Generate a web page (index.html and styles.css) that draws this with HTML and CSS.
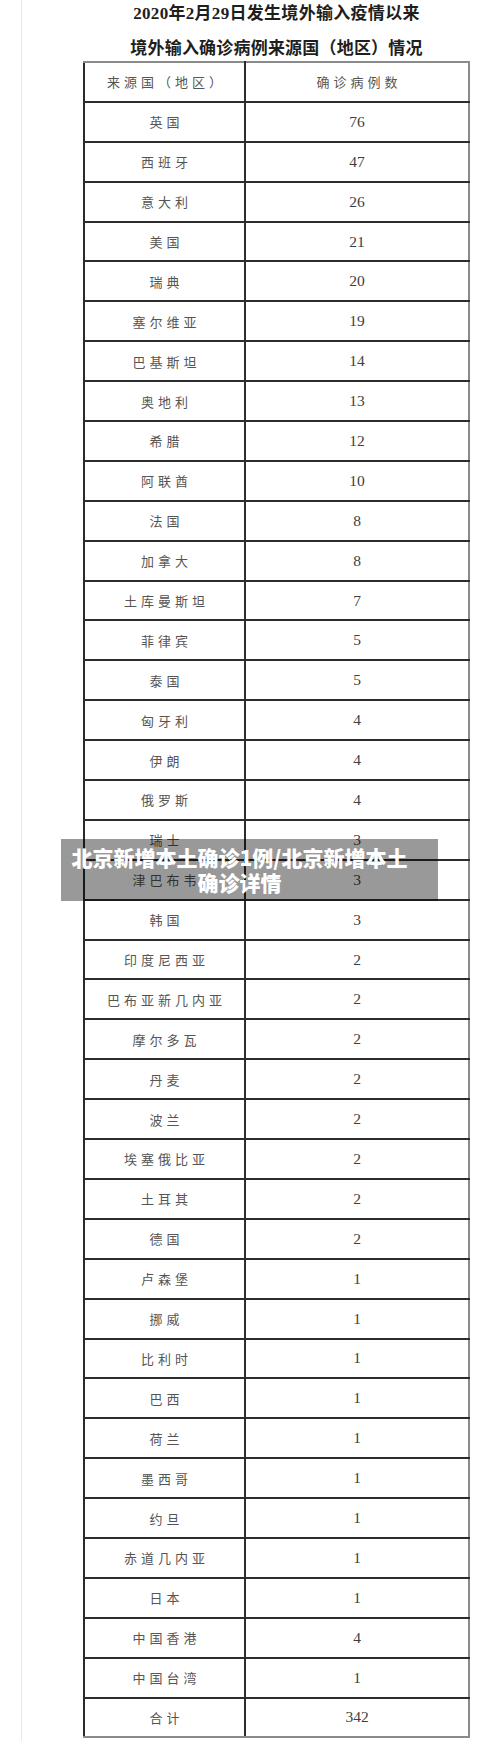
FILE: index.html
```html
<!DOCTYPE html>
<html lang="zh-CN">
<head>
<meta charset="utf-8">
<title>北京新增本土确诊1例/北京新增本土确诊详情</title>
<link rel="stylesheet" href="styles.css">
</head>
<body>
<div class="page">
  <div class="article">
    <div class="figure">
      <p class="title title-1">2020年2月29日发生境外输入疫情以来</p>
      <p class="title title-2">境外输入确诊病例来源国（地区）情况</p>
      <table class="cases">
        <colgroup><col class="col-name"><col class="col-num"></colgroup>
        <thead>
          <tr><th>来源国（地区）</th><th>确诊病例数</th></tr>
        </thead>
        <tbody>
          <tr><td>英国</td><td class="num">76</td></tr>
          <tr><td>西班牙</td><td class="num">47</td></tr>
          <tr><td>意大利</td><td class="num">26</td></tr>
          <tr><td>美国</td><td class="num">21</td></tr>
          <tr><td>瑞典</td><td class="num">20</td></tr>
          <tr><td>塞尔维亚</td><td class="num">19</td></tr>
          <tr><td>巴基斯坦</td><td class="num">14</td></tr>
          <tr><td>奥地利</td><td class="num">13</td></tr>
          <tr><td>希腊</td><td class="num">12</td></tr>
          <tr><td>阿联酋</td><td class="num">10</td></tr>
          <tr><td>法国</td><td class="num">8</td></tr>
          <tr><td>加拿大</td><td class="num">8</td></tr>
          <tr><td>土库曼斯坦</td><td class="num">7</td></tr>
          <tr><td>菲律宾</td><td class="num">5</td></tr>
          <tr><td>泰国</td><td class="num">5</td></tr>
          <tr><td>匈牙利</td><td class="num">4</td></tr>
          <tr><td>伊朗</td><td class="num">4</td></tr>
          <tr><td>俄罗斯</td><td class="num">4</td></tr>
          <tr><td>瑞士</td><td class="num">3</td></tr>
          <tr><td>津巴布韦</td><td class="num">3</td></tr>
          <tr><td>韩国</td><td class="num">3</td></tr>
          <tr><td>印度尼西亚</td><td class="num">2</td></tr>
          <tr><td>巴布亚新几内亚</td><td class="num">2</td></tr>
          <tr><td>摩尔多瓦</td><td class="num">2</td></tr>
          <tr><td>丹麦</td><td class="num">2</td></tr>
          <tr><td>波兰</td><td class="num">2</td></tr>
          <tr><td>埃塞俄比亚</td><td class="num">2</td></tr>
          <tr><td>土耳其</td><td class="num">2</td></tr>
          <tr><td>德国</td><td class="num">2</td></tr>
          <tr><td>卢森堡</td><td class="num">1</td></tr>
          <tr><td>挪威</td><td class="num">1</td></tr>
          <tr><td>比利时</td><td class="num">1</td></tr>
          <tr><td>巴西</td><td class="num">1</td></tr>
          <tr><td>荷兰</td><td class="num">1</td></tr>
          <tr><td>墨西哥</td><td class="num">1</td></tr>
          <tr><td>约旦</td><td class="num">1</td></tr>
          <tr><td>赤道几内亚</td><td class="num">1</td></tr>
          <tr><td>日本</td><td class="num">1</td></tr>
          <tr><td>中国香港</td><td class="num">4</td></tr>
          <tr><td>中国台湾</td><td class="num">1</td></tr>
          <tr class="total"><td>合计</td><td class="num">342</td></tr>
        </tbody>
      </table>
    </div>
  </div>
  <div class="caption">北京新增本土确诊1例/北京新增本土确诊详情</div>
</div>
</body>
</html>
```
FILE: styles.css
```css
html, body {
  margin: 0;
  padding: 0;
  background: #ffffff;
}

.page {
  position: relative;
  width: 500px;
  min-height: 1741px;
  overflow: hidden;
}

.article {
  margin-left: 21px;
  border-left: 1px solid #e9e9e9;
  min-height: 1741px;
  padding-left: 62px;
}

.figure {
  width: 385px;
  display: flex;
  flex-direction: column;
  align-items: center;
}

.title {
  margin: 0;
  font-family: "Liberation Serif", "Noto Sans CJK SC", serif;
  font-weight: bold;
  font-size: 17px;
  color: #1e1e1e;
  text-align: center;
  white-space: nowrap;
}

.title-1 {
  line-height: 28px;
  letter-spacing: 0.3px;
}

.title-2 {
  margin-top: 9px;
  line-height: 24px;
  letter-spacing: 0.2px;
}

.cases {
  width: 385px;
  table-layout: fixed;
  border-collapse: collapse;
  border-top: 2px solid #8a8a8a;
  border-right: 2px solid #8a8a8a;
  border-bottom: 2px solid #8a8a8a;
  border-left: 2px solid #2a2a2a;
}

.col-name { width: 161px; }
.col-num { width: 224px; }

.cases th,
.cases td {
  height: 37.9px;
  padding: 0;
  text-align: center;
  vertical-align: middle;
  border-bottom: 2px solid #2c2c2c;
  border-right: 2px solid #2c2c2c;
  font-family: "Noto Sans CJK SC", sans-serif;
  font-weight: 400;
  font-size: 13px;
  letter-spacing: 4px;
  text-indent: 4px;
  color: #555555;
  white-space: nowrap;
}

.cases th:last-child,
.cases td:last-child {
  border-right: 2px solid #8a8a8a;
}

.cases .total td {
  border-bottom: 2px solid #8a8a8a;
}

.cases td.num {
  font-family: "Liberation Serif", serif;
  font-size: 15.5px;
  letter-spacing: 0;
  text-indent: 0;
  color: #3e3e3e;
  border-right: 2px solid #8a8a8a;
}

.cases td:first-child {
  border-right: 2px solid #2c2c2c;
}

.caption {
  position: absolute;
  left: 61px;
  top: 839px;
  width: 377px;
  height: 62px;
  box-sizing: border-box;
  padding: 6px 26px 0 6px;
  background: rgba(0, 0, 0, 0.4);
  color: #ffffff;
  font-family: "Noto Sans CJK SC", sans-serif;
  font-weight: 900;
  font-size: 21px;
  line-height: 25px;
  text-align: center;
}
```
